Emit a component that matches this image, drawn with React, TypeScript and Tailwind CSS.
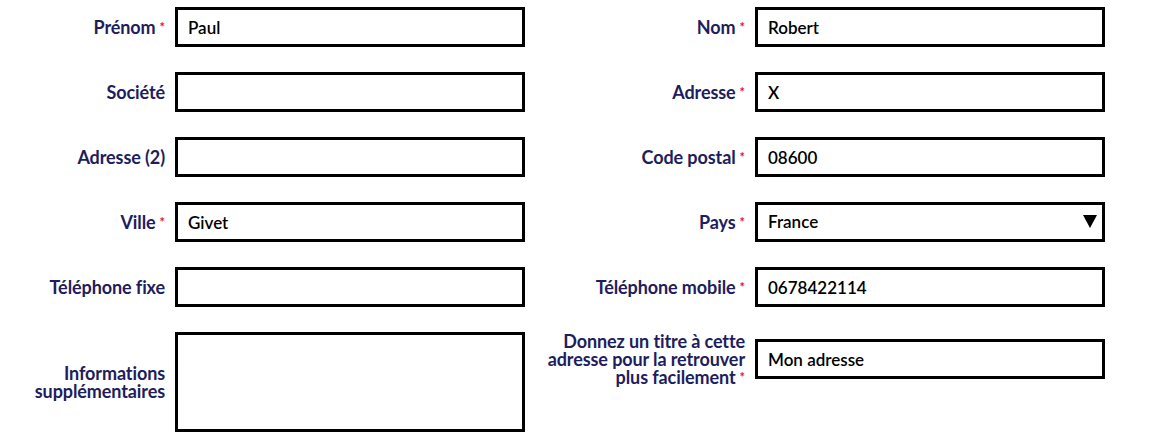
import React from 'react'

const labelCls =
  'font-bold text-[18px] leading-[18px] text-[#211d5c] text-right tracking-[-0.1px]'
const boxCls =
  'h-[40px] w-[350px] border-[3px] border-black bg-white px-[10px] text-[17px] font-semibold text-black outline-none'

function Star() {
  return <span className="ml-[4px] text-[13px] align-top text-[#e3171f]">*</span>
}

function Field({
  label,
  value = '',
  required,
  labelWidth,
}: {
  label: React.ReactNode
  value?: string
  required?: boolean
  labelWidth: string
}) {
  return (
    <div className="flex items-center gap-[10px]">
      <label className={`${labelWidth} shrink-0 ${labelCls}`}>
        {label}
        {required && <Star />}
      </label>
      <input className={boxCls} defaultValue={value} />
    </div>
  )
}

export default function App() {
  return (
    <div
      className="flex w-[1156px] h-[448px] bg-white pt-[7px]"
      style={{ fontFamily: 'Lato, "Open Sans", sans-serif' }}
    >
      {/* left column */}
      <div className="flex flex-col gap-[25px]">
        <Field labelWidth="w-[165px]" label="Prénom" value="Paul" required />
        <Field labelWidth="w-[165px]" label="Société" />
        <Field labelWidth="w-[165px]" label="Adresse (2)" />
        <Field labelWidth="w-[165px]" label="Ville" value="Givet" required />
        <Field labelWidth="w-[165px]" label="Téléphone fixe" />
        <div className="flex items-center gap-[10px]">
          <label className={`w-[165px] shrink-0 ${labelCls}`}>
            Informations
            <br />
            supplémentaires
          </label>
          <textarea className={`${boxCls} h-[100px] resize-none py-2`} />
        </div>
      </div>

      {/* right column */}
      <div className="ml-[20px] flex flex-col gap-[25px]">
        <Field labelWidth="w-[200px]" label="Nom" value="Robert" required />
        <Field labelWidth="w-[200px]" label="Adresse" value="X" required />
        <Field labelWidth="w-[200px]" label="Code postal" value="08600" required />
        <div className="flex items-center gap-[10px]">
          <label className={`w-[200px] shrink-0 ${labelCls}`}>
            Pays
            <Star />
          </label>
          <div className="relative">
            <select className={`${boxCls} appearance-none`} defaultValue="FR">
              <option value="FR">France</option>
            </select>
            <svg
              className="pointer-events-none absolute right-[8px] top-[12px]"
              width="14"
              height="14"
              viewBox="0 0 14 14"
            >
              <path d="M0 1 H14 L7 14 Z" fill="black" />
            </svg>
          </div>
        </div>
        <Field
          labelWidth="w-[200px]"
          label="Téléphone mobile"
          value="0678422114"
          required
        />
        <div className="flex items-center gap-[10px]">
          <label className={`w-[200px] shrink-0 ${labelCls}`}>
            Donnez un titre à cette
            <br />
            adresse pour la retrouver
            <br />
            plus facilement
            <Star />
          </label>
          <input className={boxCls} defaultValue="Mon adresse" />
        </div>
      </div>
    </div>
  )
}
